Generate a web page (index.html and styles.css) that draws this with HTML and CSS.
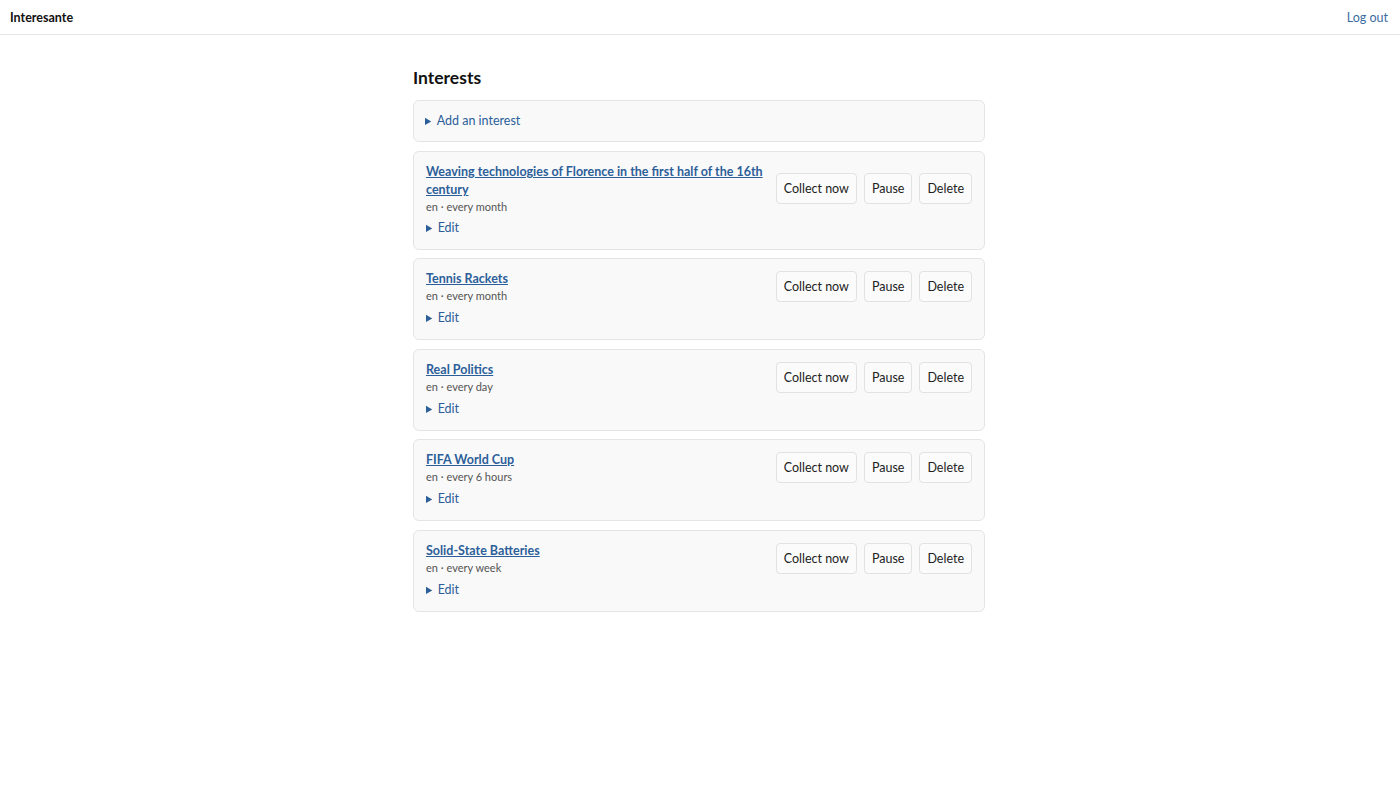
FILE: index.html
```html
<!DOCTYPE html>
<html lang="en">
<head>
    <meta charset="UTF-8">
    <meta name="viewport" content="width=device-width, initial-scale=1.0">
    <title>Interesante</title>
    <link rel="stylesheet" href="styles.css">
</head>
<body>
    <header class="topbar">
        <a class="brand" href="#">Interesante</a>
        <a class="logout" href="#">Log out</a>
    </header>

    <main class="container">
        <h1>Interests</h1>

        <details class="card add">
            <summary>Add an interest</summary>
        </details>

        <div class="card interest">
            <div class="row">
                <div class="info">
                    <a class="title" href="#">Weaving technologies of Florence in the first half of the 16th century</a>
                    <div class="meta">en · every month</div>
                </div>
                <div class="actions">
                    <button>Collect now</button>
                    <button>Pause</button>
                    <button>Delete</button>
                </div>
            </div>
            <details class="edit"><summary>Edit</summary></details>
        </div>

        <div class="card interest">
            <div class="row">
                <div class="info">
                    <a class="title" href="#">Tennis Rackets</a>
                    <div class="meta">en · every month</div>
                </div>
                <div class="actions">
                    <button>Collect now</button>
                    <button>Pause</button>
                    <button>Delete</button>
                </div>
            </div>
            <details class="edit"><summary>Edit</summary></details>
        </div>

        <div class="card interest">
            <div class="row">
                <div class="info">
                    <a class="title" href="#">Real Politics</a>
                    <div class="meta">en · every day</div>
                </div>
                <div class="actions">
                    <button>Collect now</button>
                    <button>Pause</button>
                    <button>Delete</button>
                </div>
            </div>
            <details class="edit"><summary>Edit</summary></details>
        </div>

        <div class="card interest">
            <div class="row">
                <div class="info">
                    <a class="title" href="#">FIFA World Cup</a>
                    <div class="meta">en · every 6 hours</div>
                </div>
                <div class="actions">
                    <button>Collect now</button>
                    <button>Pause</button>
                    <button>Delete</button>
                </div>
            </div>
            <details class="edit"><summary>Edit</summary></details>
        </div>

        <div class="card interest">
            <div class="row">
                <div class="info">
                    <a class="title" href="#">Solid-State Batteries</a>
                    <div class="meta">en · every week</div>
                </div>
                <div class="actions">
                    <button>Collect now</button>
                    <button>Pause</button>
                    <button>Delete</button>
                </div>
            </div>
            <details class="edit"><summary>Edit</summary></details>
        </div>
    </main>
</body>
</html>
```

FILE: styles.css
```css
body {
    font-family: Lato, "Noto Sans", sans-serif;
    font-size: 12.5px;
    margin: 0;
    color: #222;
    background-color: #fff;
}
a {
    color: #2c5f99;
    text-decoration: none;
}
.topbar {
    display: flex;
    justify-content: space-between;
    align-items: center;
    height: 34px;
    padding: 0 12px 0 10px;
    border-bottom: 1px solid #e6e6e6;
}
.brand {
    color: #111;
    font-weight: bold;
}
.logout {
    color: #3a6b9f;
}
.container {
    width: 572px;
    margin: 0 auto;
    padding-top: 32px;
    position: relative;
    left: -1px;
}
h1 {
    font-size: 17.5px;
    margin: 0 0 12px;
    color: #111;
}
.card {
    background-color: #f9f9f9;
    border: 1px solid #e4e4e4;
    border-radius: 6px;
    margin-bottom: 9px;
}
.interest + .interest {
    margin-top: -0.6px;
}
summary {
    color: #2c5f99;
    cursor: pointer;
    line-height: 18px;
}
summary::marker {
    font-size: 11px;
}
.add summary {
    padding: 11px;
}
.interest {
    padding: 11px 12px 12px;
}
.row {
    display: flex;
    align-items: center;
    gap: 12px;
}
.info {
    flex: 1;
}
.title {
    font-weight: bold;
    text-decoration: underline;
    line-height: 18px;
}
.meta {
    font-size: 11px;
    line-height: 15px;
    color: #555;
}
.edit {
    margin-top: 6px;
}
.interest:first-of-type .edit {
    margin-top: 5px;
}
.actions {
    display: flex;
    gap: 7px;
}
.actions button {
    font-family: inherit;
    font-size: 12.5px;
    color: #222;
    background-color: #fbfbfb;
    border: 1px solid #e2e2e2;
    border-radius: 4px;
    padding: 7px 7px;
    cursor: pointer;
}
```
